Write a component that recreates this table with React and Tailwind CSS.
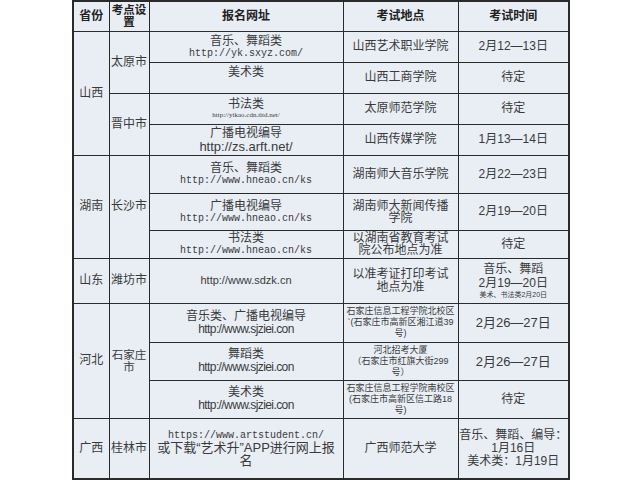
import React from "react";

const cjk = "font-['Liberation_Sans','Noto_Sans_CJK_SC',sans-serif]";
const mono = "font-['Liberation_Mono','Noto_Sans_CJK_SC',monospace]";
const td = "border border-[#2a2a2a] text-center align-middle p-0";

export default function App() {
  return (
    <div className={`w-[640px] h-[480px] bg-white overflow-hidden text-[#3a3a3a] ${cjk}`}>
      <table className="ml-[72px] w-[496px] table-fixed border-collapse border-2 border-[#2a2a2a] bg-[#e9eef5] text-[12px] leading-[13px]">
        <colgroup>
          <col className="w-[36px]" />
          <col className="w-[40px]" />
          <col className="w-[194px]" />
          <col className="w-[115px]" />
          <col className="w-[111px]" />
        </colgroup>
        <tbody>
          <tr className="h-[30px] font-bold text-[#222]">
            <td className={td}>省份</td>
            <td className={`${td} leading-[12px] text-[11.5px]`}>
              <div>考点设</div>
              <div>置</div>
            </td>
            <td className={td}>报名网址</td>
            <td className={td}>考试地点</td>
            <td className={td}>考试时间</td>
          </tr>
          {/* 山西 */}
          <tr className="h-[31px]">
            <td className={td} rowSpan={4}>山西</td>
            <td className={td} rowSpan={2}>太原市</td>
            <td className={td}>
              <div>音乐、舞蹈类</div>
              <div className={`${mono} text-[10px] leading-[11px]`}>http://yk.sxyz.com/</div>
            </td>
            <td className={td}>山西艺术职业学院</td>
            <td className={td}>2月12—13日</td>
          </tr>
          <tr className="h-[31px]">
            <td className={`${td} align-top pt-[3px]`}>美术类</td>
            <td className={td}>山西工商学院</td>
            <td className={td}>待定</td>
          </tr>
          <tr className="h-[31px]">
            <td className={td} rowSpan={2}>晋中市</td>
            <td className={td}>
              <div>书法类</div>
              <div className="font-['Liberation_Serif',serif] text-[7px] leading-[9px]">http://yikao.cdn.titd.net/</div>
            </td>
            <td className={td}>太原师范学院</td>
            <td className={td}>待定</td>
          </tr>
          <tr className="h-[31px]">
            <td className={td}>
              <div>广播电视编导</div>
              <div className="text-[13px] leading-[13px]">http://zs.arft.net/</div>
            </td>
            <td className={td}>山西传媒学院</td>
            <td className={td}>1月13—14日</td>
          </tr>
          {/* 湖南 */}
          <tr className="h-[38px]">
            <td className={td} rowSpan={3}>湖南</td>
            <td className={td} rowSpan={3}>长沙市</td>
            <td className={td}>
              <div>音乐、舞蹈类</div>
              <div className={`${mono} text-[10px] leading-[11px]`}>http://www.hneao.cn/ks</div>
            </td>
            <td className={td}>湖南师大音乐学院</td>
            <td className={td}>2月22—23日</td>
          </tr>
          <tr className="h-[37px]">
            <td className={td}>
              <div>广播电视编导</div>
              <div className={`${mono} text-[10px] leading-[11px]`}>http://www.hneao.cn/ks</div>
            </td>
            <td className={`${td} px-[6px] leading-[12px]`}>湖南师大新闻传播学院</td>
            <td className={td}>2月19—20日</td>
          </tr>
          <tr className="h-[28px]">
            <td className={td}>
              <div>书法类</div>
              <div className={`${mono} text-[10px] leading-[11px]`}>http://www.hneao.cn/ks</div>
            </td>
            <td className={`${td} px-[6px] leading-[12px]`}>以湖南省教育考试院公布地点为准</td>
            <td className={td}>待定</td>
          </tr>
          {/* 山东 */}
          <tr className="h-[45px]">
            <td className={td}>山东</td>
            <td className={td}>潍坊市</td>
            <td className={`${td} text-[11px]`}>http://www.sdzk.cn</td>
            <td className={`${td} px-[8px] leading-[13px]`}>以准考证打印考试地点为准</td>
            <td className={td}>
              <div className="leading-[14px]">音乐、舞蹈</div>
              <div className="leading-[14px]">2月19—20日</div>
              <div className="text-[7px] leading-[10px]">美术、书法类2月20日</div>
            </td>
          </tr>
          {/* 河北 */}
          <tr className="h-[39px]">
            <td className={td} rowSpan={3}>河北</td>
            <td className={`${td} leading-[12px] text-[11.5px]`} rowSpan={3}>
              <div>石家庄</div>
              <div>市</div>
            </td>
            <td className={td}>
              <div>音乐类、广播电视编导</div>
              <div className="tracking-[-0.6px]">http://www.sjziei.con</div>
            </td>
            <td className={`${td} text-[9px] leading-[11px]`}>
              <div>石家庄信息工程学院北校区</div>
              <div>`(石家庄市高新区湘江道39</div>
              <div>号)</div>
            </td>
            <td className={`${td} text-[13px]`}>2月26—27日</td>
          </tr>
          <tr className="h-[38px]">
            <td className={td}>
              <div>舞蹈类</div>
              <div className="tracking-[-0.6px]">http://www.sjziei.con</div>
            </td>
            <td className={`${td} text-[9px] leading-[11px]`}>
              <div>河北招考大厦</div>
              <div>（石家庄市红旗大街299</div>
              <div>号）</div>
            </td>
            <td className={`${td} text-[13px]`}>2月26—27日</td>
          </tr>
          <tr className="h-[38px]">
            <td className={td}>
              <div>美术类</div>
              <div className="tracking-[-0.6px]">http://www.sjziei.con</div>
            </td>
            <td className={`${td} text-[9px] leading-[11px]`}>
              <div>石家庄信息工程学院南校区</div>
              <div>(石家庄市高新区信工路18</div>
              <div>号)</div>
            </td>
            <td className={td}>待定</td>
          </tr>
          {/* 广西 */}
          <tr className="h-[61px]">
            <td className={td}>广西</td>
            <td className={td}>桂林市</td>
            <td className={`${td} px-[4px]`}>
              <div className={`${mono} text-[10px] leading-[11px]`}>https://www.artstudent.cn/</div>
              <div className="text-[13px] leading-[13px]">或下载“艺术升”APP进行网上报名</div>
            </td>
            <td className={td}>广西师范大学</td>
            <td className={`${td} text-[12px] leading-[13px]`}>
              <div className="whitespace-nowrap">音乐、舞蹈、编导：</div>
              <div>1月16日</div>
              <div>美术类：1月19日</div>
            </td>
          </tr>
        </tbody>
      </table>
    </div>
  );
}
